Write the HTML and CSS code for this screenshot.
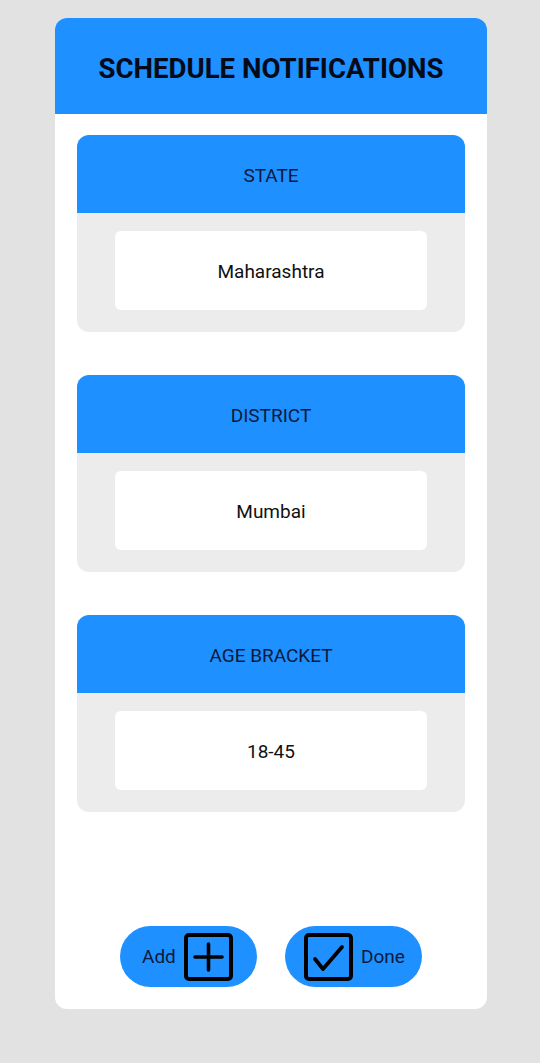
FILE: index.html
```html
<!DOCTYPE html>
<html>
<head>
<meta charset="utf-8">
<link rel="stylesheet" href="styles.css">
</head>
<body>
<div class="panel">
  <div class="panel-header"><h1>SCHEDULE NOTIFICATIONS</h1></div>
  <div class="panel-body">
    <div class="card">
      <div class="card-head">STATE</div>
      <div class="card-body"><div class="field">Maharashtra</div></div>
    </div>
    <div class="card">
      <div class="card-head">DISTRICT</div>
      <div class="card-body"><div class="field">Mumbai</div></div>
    </div>
    <div class="card">
      <div class="card-head">AGE BRACKET</div>
      <div class="card-body"><div class="field">18-45</div></div>
    </div>
    <div class="actions">
      <button class="pill pill-add">
        <span>Add</span>
        <svg width="49" height="48" viewBox="0 0 49 48"><rect x="2" y="2" width="45" height="44" rx="3" fill="none" stroke="#000" stroke-width="4"/><path d="M24.5 11v26M11 24h27" stroke="#000" stroke-width="3.6" fill="none" stroke-linecap="round"/></svg>
      </button>
      <button class="pill pill-done">
        <svg width="49" height="48" viewBox="0 0 49 48"><rect x="2" y="2" width="45" height="44" rx="3" fill="none" stroke="#000" stroke-width="4"/><path d="M11 26l8 10L38 14" stroke="#000" stroke-width="3.8" fill="none" stroke-linecap="round" stroke-linejoin="round"/></svg>
        <span>Done</span>
      </button>
    </div>
  </div>
</div>
</body>
</html>
```
FILE: styles.css
```css
html, body { margin: 0; padding: 0; }
body {
  background: #e2e2e2;
  width: 540px;
  height: 1063px;
  font-family: Roboto, "Liberation Sans", sans-serif;
  overflow: hidden;
}
.panel {
  margin: 18px 0 0 55px;
  width: 432px;
  height: 991px;
  background: #fff;
  border-radius: 12px;
  overflow: hidden;
  display: flex;
  flex-direction: column;
}
.panel-header {
  height: 96px;
  background: #1e90ff;
  display: flex;
  align-items: center;
  justify-content: center;
}
.panel-header h1 {
  margin: 0;
  font-size: 27.6px;
  font-weight: 700;
  color: #050a18;
  letter-spacing: 0;
  padding-top: 4px;
}
.panel-body {
  flex: 1;
  display: flex;
  flex-direction: column;
  padding: 21px 22px 22px;
  gap: 43px;
}
.card {
  border-radius: 12px;
  overflow: hidden;
  background: #ececec;
}
.card-head {
  height: 78px;
  background: #1e90ff;
  display: flex;
  align-items: center;
  justify-content: center;
  font-size: 19px;
  color: #0b1a3c;
  padding-top: 2px;
  box-sizing: border-box;
}
.card-body {
  padding: 18px 38px 22px;
}
.field {
  height: 79px;
  background: #fff;
  border-radius: 6px;
  display: flex;
  align-items: center;
  justify-content: center;
  font-size: 19px;
  color: #111;
  padding-top: 1px;
  box-sizing: border-box;
}
.actions {
  margin-top: auto;
  display: flex;
  justify-content: center;
  gap: 28px;
}
.pill {
  width: 137px;
  height: 61px;
  border: none;
  border-radius: 31px;
  background: #1e90ff;
  display: flex;
  align-items: center;
  gap: 8px;
  font-family: Roboto, "Liberation Sans", sans-serif;
  font-size: 19px;
  color: #0b1a3c;
  padding: 0;
  box-sizing: border-box;
}
.pill svg { display: block; }
.pill-add { padding-left: 22px; }
.pill-done { padding-left: 19px; }
```
